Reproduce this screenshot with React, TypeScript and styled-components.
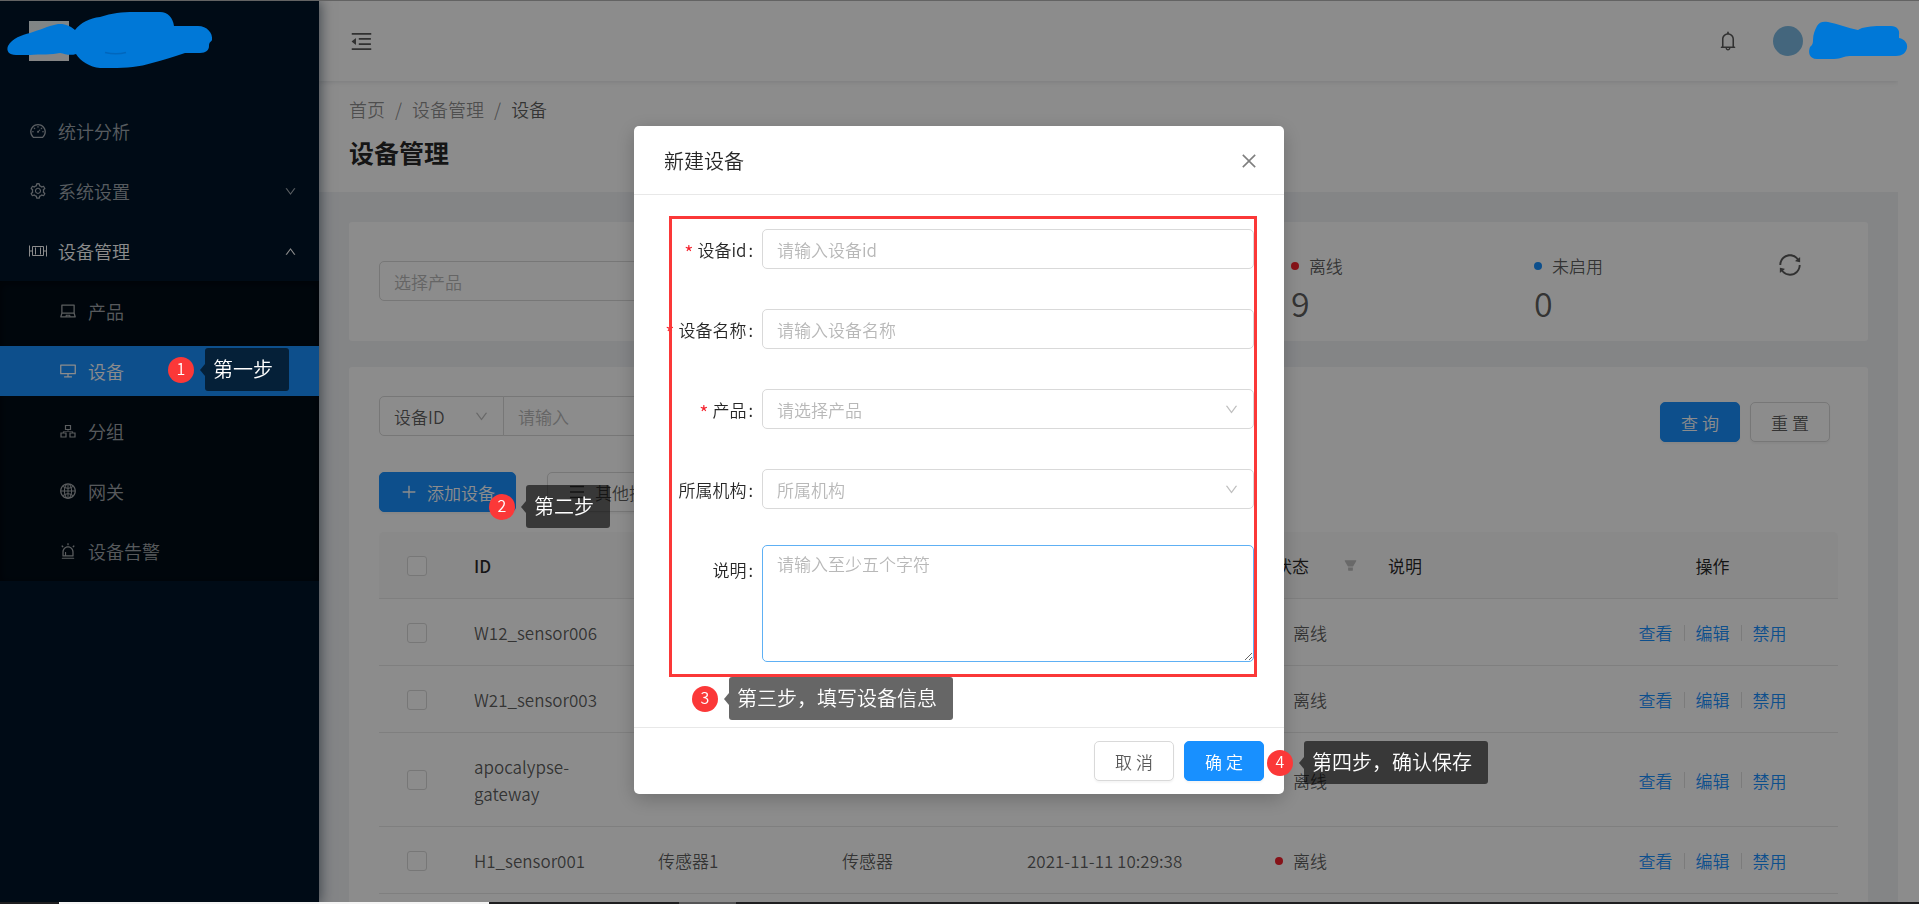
import React from "react";
import styled, { createGlobalStyle, css } from "styled-components";
import {
  AiFillFilter,
  AiOutlineAlert,
  AiOutlineBell,
  AiOutlineClose,
  AiOutlineDashboard,
  AiOutlineDesktop,
  AiOutlineDown,
  AiOutlineGlobal,
  AiOutlineLaptop,
  AiOutlineMenu,
  AiOutlineMenuFold,
  AiOutlinePlus,
  AiOutlineSetting,
  AiOutlineSync,
  AiOutlineUp,
} from "react-icons/ai";

const BLUE = "#1890ff";
const RED = "#fb3838";
const BORDER = "#d9d9d9";
const TEXT = "rgba(0, 0, 0, 0.65)";
const HEADING = "rgba(0, 0, 0, 0.85)";

const GlobalStyle = createGlobalStyle`
  *, *::before, *::after { box-sizing: border-box; }
  html, body { margin: 0; height: 100%; overflow: hidden; background: #fff; }
  body, button, input, select, textarea {
    font-family: "Noto Sans CJK SC", "Noto Sans", sans-serif;
    font-size: 17px;
    font-weight: 350;
    line-height: 27px;
    color: ${TEXT};
  }
  svg { display: block; flex: none; }
  a { color: inherit; text-decoration: none; }
`;

/* ---------- shell ---------- */

const Shell = styled.div`
  display: flex;
  height: 100vh;
  overflow: hidden;
  border-top: 1px solid #b5b5b5;
`;

const Sidebar = styled.nav`
  position: relative;
  z-index: 2;
  flex: none;
  width: 319px;
  background: #001529;
  box-shadow: 2px 0 12px rgba(0, 21, 41, 0.5);
`;

const Brand = styled.div`
  height: 95px;
  padding: 20px 29px;
`;

const Logo = styled.div`
  width: 40px;
  height: 40px;
  background: linear-gradient(#e8f2f4, #f2f2f2 40%);
`;

const MenuItem = styled.a<{ $bright?: boolean; $active?: boolean; $nested?: boolean }>`
  display: flex;
  align-items: center;
  gap: 11px;
  height: 50px;
  margin: 10px 0;
  padding: 0 22px 0 ${(p) => (p.$nested ? 59 : 29)}px;
  font-size: 18px;
  color: ${(p) => (p.$bright || p.$active ? "#fff" : "rgba(255, 255, 255, 0.65)")};
  background: ${(p) => (p.$active ? BLUE : "transparent")};
`;

const MenuLabel = styled.span`
  flex: 1;
`;

const SubMenu = styled.div`
  display: flow-root;
  height: 300px;
  margin-top: -5px;
  background: #000c17;
  box-shadow: inset 0 2px 10px rgba(0, 0, 0, 0.45);

  ${MenuItem}:first-child { margin-top: 5px; }
`;

const Main = styled.main`
  flex: 1;
  min-width: 0;
  overflow: hidden;
  display: flex;
  flex-direction: column;
  margin-right: 21px;
  background: #f0f2f5;
`;

const TopBar = styled.header`
  position: relative;
  flex: none;
  display: flex;
  align-items: center;
  height: 80px;
  padding: 0 95px 0 30px;
  background: #fff;
  box-shadow: 0 1px 5px rgba(0, 21, 41, 0.12);
`;

const IconButton = styled.button<{ $color?: string }>`
  display: flex;
  padding: 0;
  border: 0;
  background: none;
  color: ${(p) => p.$color ?? TEXT};
`;

const Account = styled.div`
  display: flex;
  align-items: center;
  gap: 34px;
  margin-left: auto;
`;

const Avatar = styled.div`
  width: 30px;
  height: 30px;
  border-radius: 50%;
  background: #7dbbe3;
`;

const PageHeader = styled.section`
  flex: none;
  padding: 15px 30px 22px;
  background: #fff;
`;

const Crumbs = styled.div`
  display: flex;
  gap: 10px;
  font-size: 18px;
  line-height: 26px;
  color: rgba(0, 0, 0, 0.45);
`;

const CurrentCrumb = styled.span`
  color: ${TEXT};
`;

const Title = styled.h1`
  margin: 12px 0 0;
  font-size: 25px;
  line-height: 36px;
  font-weight: 700;
  color: ${HEADING};
`;

const Content = styled.div`
  flex: 1;
  min-height: 0;
  display: flex;
  flex-direction: column;
  gap: 26px;
  padding: 30px 30px 0;
`;

const Card = styled.section`
  background: #fff;
  border-radius: 3px;
`;

/* ---------- form controls ---------- */

const control = css`
  height: 40px;
  padding: 0 14px;
  border: 1px solid ${BORDER};
  border-radius: 5px;
  background: #fff;
  outline: none;
  &::placeholder { color: #b8b8b8; opacity: 1; }
`;

const TextInput = styled.input<{ $joined?: boolean }>`
  ${control}
  width: ${(p) => (p.$joined ? "220px" : "100%")};
  ${(p) => p.$joined && "border-radius: 0 5px 5px 0; margin-left: -1px;"}
`;

const SelectBox = styled.div<{ $width?: string; $joined?: boolean; $muted?: boolean }>`
  display: flex;
  align-items: center;
  width: ${(p) => p.$width ?? "100%"};
  color: #bfbfbf;

  select {
    ${control}
    appearance: none;
    width: 100%;
    color: ${(p) => (p.$muted ? "#b8b8b8" : TEXT)};
    ${(p) => p.$joined && "border-radius: 5px 0 0 5px;"}
  }
  svg {
    margin-left: -30px;
    pointer-events: none;
  }
`;

const TextArea = styled.textarea`
  ${control}
  display: block;
  width: 100%;
  height: 117px;
  margin-top: -4px;
  padding: 4px 14px;
  border-color: #5eb0f4;
`;

const Button = styled.button<{ $primary?: boolean; $wide?: boolean }>`
  display: flex;
  align-items: center;
  justify-content: center;
  gap: 9px;
  height: 40px;
  min-width: 80px;
  padding: ${(p) => (p.$wide ? "0 20px" : "0")};
  border: 1px solid ${(p) => (p.$primary ? BLUE : BORDER)};
  border-radius: 5px;
  background: ${(p) => (p.$primary ? BLUE : "#fff")};
  color: ${(p) => (p.$primary ? "#fff" : TEXT)};
  box-shadow: 0 2px 2px rgba(0, 0, 0, 0.04);
  white-space: nowrap;
`;

/* ---------- statistics ---------- */

const StatCard = styled(Card)`
  display: grid;
  grid-template-columns: 15fr 4fr 4fr 1fr;
  padding: 30px 30px 22px;
`;

const ProductPicker = styled.div`
  margin-top: 9px;
`;

const Stat = styled.div`
  display: flex;
  flex-direction: column;
  gap: 8px;
`;

const StatusText = styled.span`
  display: flex;
  align-items: center;
  gap: 10px;
`;

const Dot = styled.i<{ $color: string }>`
  width: 8px;
  height: 8px;
  border-radius: 50%;
  background: ${(p) => p.$color};
`;

const StatValue = styled.span`
  font-size: 34px;
  line-height: 32px;
`;

/* ---------- table card ---------- */

const TableCard = styled(Card)`
  flex: 1;
  padding: 29px 30px 0;
`;

const SearchRow = styled.div`
  display: flex;
  align-items: flex-start;
  height: 46px;
  margin-bottom: 30px;
`;

const SearchButtons = styled.div`
  display: flex;
  align-self: flex-end;
  gap: 10px;
  margin-left: auto;
  padding-right: 8px;
`;

const ActionRow = styled.div`
  display: flex;
  gap: 31px;
  margin-bottom: 20px;
`;

const Table = styled.table`
  width: 100%;
  table-layout: fixed;
  border-collapse: separate;
  border-spacing: 0;

  th, td {
    padding: 20px 20px 19px;
    border-bottom: 1px solid #e8e8e8;
    text-align: left;
    vertical-align: middle;
  }
  th {
    font-weight: 400;
    color: ${HEADING};
    background: #fafafa;
  }
  th:first-child, td:first-child { padding-left: 28px; padding-right: 0; }
  th:first-child { border-top-left-radius: 5px; }
  th:last-child { border-top-right-radius: 5px; text-align: center; }
`;

const IdHead = styled.span`
  font-weight: 500;
`;

const Checkbox = styled.input`
  appearance: none;
  display: block;
  width: 20px;
  height: 20px;
  margin: 0;
  border: 1px solid ${BORDER};
  border-radius: 3px;
  background: #fff;
`;

const HeadWithFilter = styled.span`
  display: flex;
  align-items: center;
  justify-content: space-between;
  margin-right: -10px;
  color: ${HEADING};
  svg { color: #bfbfbf; }
`;

const RowActions = styled.div`
  display: flex;
  align-items: center;
  justify-content: center;
  color: ${BLUE};

  a + a {
    display: flex;
    align-items: center;
  }
  a + a::before {
    content: "";
    width: 1px;
    height: 16px;
    margin: 0 11px;
    background: #e0e0e0;
  }
`;

/* ---------- dialog ---------- */

const Mask = styled.div`
  position: fixed;
  inset: 0;
  z-index: 10;
  display: flex;
  justify-content: center;
  align-items: flex-start;
  padding: 126px 1px 0 0;
  background: rgba(0, 0, 0, 0.45);
`;

const Dialog = styled.div`
  position: relative;
  width: 650px;
  background: #fff;
  border-radius: 5px;
  box-shadow: 0 5px 20px rgba(0, 0, 0, 0.22);
`;

const DialogHeader = styled.div`
  display: flex;
  align-items: center;
  justify-content: space-between;
  height: 69px;
  padding: 2px 25px 0 30px;
  border-bottom: 1px solid #e8e8e8;
`;

const DialogTitle = styled.h2`
  margin: 0;
  font-size: 20px;
  font-weight: 350;
  line-height: 28px;
  color: ${HEADING};
`;

const DialogBody = styled.div`
  padding: 34px 30px 65px;
`;

const Fields = styled.div`
  position: relative;
  display: flex;
  flex-direction: column;
  gap: 40px;
`;

const Field = styled.div`
  display: grid;
  grid-template-columns: 98px 1fr;
`;

const FieldLabel = styled.label<{ $required?: boolean }>`
  display: flex;
  align-items: center;
  justify-content: flex-end;
  height: 40px;
  padding-right: 9px;
  white-space: nowrap;
  color: ${HEADING};

  &::after { content: ":"; margin-left: 2px; }
  ${(p) =>
    p.$required &&
    css`
      &::before {
        content: "*";
        padding-top: 6px;
        margin-right: 4px;
        font-size: 20px;
        color: #f5222d;
      }
    `}
`;

const DialogFooter = styled.div`
  display: flex;
  justify-content: flex-end;
  gap: 10px;
  padding: 13px 20px;
  border-top: 1px solid #e8e8e8;
`;

/* ---------- walkthrough marks ---------- */

const MarkRoot = styled.div<{ $x: number; $y: number; $fixed?: boolean }>`
  position: ${(p) => (p.$fixed ? "fixed" : "absolute")};
  z-index: 20;
  left: ${(p) => p.$x}px;
  top: ${(p) => p.$y}px;
  display: flex;
  align-items: center;
  gap: 11px;
  white-space: nowrap;
`;

const MarkNumber = styled.span`
  width: 26px;
  height: 26px;
  border-radius: 50%;
  background: ${RED};
  color: #fff;
  font-size: 16px;
  line-height: 23px;
  text-align: center;
`;

const MarkTip = styled.span`
  position: relative;
  height: 43px;
  padding: 0 16px 0 8px;
  border-radius: 3px;
  background: rgba(0, 0, 0, 0.6);
  color: #fff;
  font-size: 20px;
  line-height: 42px;

  &::before {
    content: "";
    position: absolute;
    right: 100%;
    top: 16px;
    border: solid transparent;
    border-width: 6px 5px 6px 0;
    border-right-color: rgba(0, 0, 0, 0.6);
  }
`;

const Frame = styled.div`
  position: absolute;
  inset: -13px -3px -15px 5px;
  border: 3px solid ${RED};
  pointer-events: none;
`;

const Scribble = styled.svg<{ $side: "left" | "right" }>`
  position: fixed;
  z-index: 20;
  top: 0;
  ${(p) => p.$side}: 0;
`;

const BottomStrip = styled.div`
  position: fixed;
  z-index: 30;
  inset: auto 0 0 0;
  display: flex;
  height: 2px;
  background: #1e1e20;
`;

const StripPart = styled.i<{ $width: number; $color: string }>`
  width: ${(p) => p.$width}px;
  background: ${(p) => p.$color};
`;

/* ---------- drawings ---------- */

const DeviceIcon = () => (
  <svg width="18" height="18" viewBox="0 0 18 18" fill="none" stroke="currentColor">
    <path d="M0.5 3.5v11M17.5 3.5v11M0.500 9H3.500M14.500 9h3" />
    <path d="M3.500 4.500h11v9h-11zM6.500 5.500v7M11.500 5.500v7" />
  </svg>
);

const GroupIcon = () => (
  <svg width="18" height="18" viewBox="0 0 18 18" fill="none" stroke="currentColor" strokeWidth="1.2">
    <path d="M6.500 3.500h5v4h-5zM2 11h5v4H2zM11 11h5v4h-5z" />
    <path d="M9 7.500v2M4.500 11V9.500h9V11" strokeOpacity="0.6" />
  </svg>
);

type MarkProps = { n: number; text: string; x: number; y: number; fixed?: boolean };

const Mark = ({ n, text, x, y, fixed }: MarkProps) => (
  <MarkRoot $x={x} $y={y} $fixed={fixed}>
    <MarkNumber>{n}</MarkNumber>
    <MarkTip>{text}</MarkTip>
  </MarkRoot>
);

/* ---------- data ---------- */

const submenu = [
  { label: "产品", icon: <AiOutlineLaptop size={18} /> },
  { label: "设备", icon: <AiOutlineDesktop size={18} />, active: true },
  { label: "分组", icon: <GroupIcon /> },
  { label: "网关", icon: <AiOutlineGlobal size={18} /> },
  { label: "设备告警", icon: <AiOutlineAlert size={18} /> },
];

const columns = [75, 184, 184, 185, 248, 113, 219, 251];

const devices = [
  { id: "W12_sensor006", name: "", product: "", time: "" },
  { id: "W21_sensor003", name: "", product: "", time: "" },
  { id: "apocalypse-gateway", name: "", product: "", time: "" },
  { id: "H1_sensor001", name: "传感器1", product: "传感器", time: "2021-11-11 10:29:38" },
];

export default function App() {
  return (
    <>
      <GlobalStyle />
      <Shell>
        <Sidebar>
          <Brand>
            <Logo />
          </Brand>
          <MenuItem href="#">
            <AiOutlineDashboard size={18} />
            <MenuLabel>统计分析</MenuLabel>
          </MenuItem>
          <MenuItem href="#">
            <AiOutlineSetting size={18} />
            <MenuLabel>系统设置</MenuLabel>
            <AiOutlineDown size={13} />
          </MenuItem>
          <MenuItem href="#" $bright>
            <DeviceIcon />
            <MenuLabel>设备管理</MenuLabel>
            <AiOutlineUp size={13} />
          </MenuItem>
          <SubMenu>
            {submenu.map((item) => (
              <MenuItem key={item.label} href="#" $nested $active={item.active}>
                {item.icon}
                <MenuLabel>{item.label}</MenuLabel>
              </MenuItem>
            ))}
          </SubMenu>
        </Sidebar>

        <Main>
          <TopBar>
            <IconButton aria-label="收起菜单">
              <AiOutlineMenuFold size={25} />
            </IconButton>
            <Account>
              <IconButton aria-label="通知">
                <AiOutlineBell size={22} />
              </IconButton>
              <Avatar />
            </Account>
          </TopBar>
          <PageHeader>
            <Crumbs>
              <a href="#">首页</a>
              <span>/</span>
              <a href="#">设备管理</a>
              <span>/</span>
              <CurrentCrumb>设备</CurrentCrumb>
            </Crumbs>
            <Title>设备管理</Title>
          </PageHeader>

          <Content>
            <StatCard>
              <ProductPicker>
                <SelectBox $width="480px" $muted>
                  <select aria-label="选择产品">
                    <option>选择产品</option>
                  </select>
                </SelectBox>
              </ProductPicker>
              <Stat>
                <StatusText>
                  <Dot $color="#f5222d" />
                  离线
                </StatusText>
                <StatValue>9</StatValue>
              </Stat>
              <Stat>
                <StatusText>
                  <Dot $color={BLUE} />
                  未启用
                </StatusText>
                <StatValue>0</StatValue>
              </Stat>
              <IconButton aria-label="刷新">
                <AiOutlineSync size={26} />
              </IconButton>
            </StatCard>

            <TableCard>
              <SearchRow>
                <SelectBox $width="125px" $joined>
                  <select aria-label="搜索字段">
                    <option>设备ID</option>
                  </select>
                  <AiOutlineDown size={15} />
                </SelectBox>
                <TextInput $joined aria-label="搜索内容" placeholder="请输入" />
                <SearchButtons>
                  <Button $primary>查 询</Button>
                  <Button>重 置</Button>
                </SearchButtons>
              </SearchRow>
              <ActionRow>
                <Button $primary $wide>
                  <AiOutlinePlus size={18} />
                  添加设备
                </Button>
                <Button $wide>
                  <AiOutlineMenu size={18} />
                  其他操作
                </Button>
              </ActionRow>
              <Table>
                <colgroup>
                  {columns.map((width, i) => (
                    <col key={i} width={width} />
                  ))}
                </colgroup>
                <thead>
                  <tr>
                    <th>
                      <Checkbox type="checkbox" aria-label="全选" />
                    </th>
                    <th>
                      <IdHead>ID</IdHead>
                    </th>
                    <th />
                    <th />
                    <th />
                    <th>
                      <HeadWithFilter>
                        状态
                        <AiFillFilter size={15} />
                      </HeadWithFilter>
                    </th>
                    <th>说明</th>
                    <th>操作</th>
                  </tr>
                </thead>
                <tbody>
                  {devices.map((device) => (
                    <tr key={device.id}>
                      <td>
                        <Checkbox type="checkbox" aria-label={device.id} />
                      </td>
                      <td>{device.id}</td>
                      <td>{device.name}</td>
                      <td>{device.product}</td>
                      <td>{device.time}</td>
                      <td>
                        <StatusText>
                          <Dot $color="#f5222d" />
                          离线
                        </StatusText>
                      </td>
                      <td />
                      <td>
                        <RowActions>
                          <a href="#">查看</a>
                          <a href="#">编辑</a>
                          <a href="#">禁用</a>
                        </RowActions>
                      </td>
                    </tr>
                  ))}
                </tbody>
              </Table>
            </TableCard>
          </Content>
        </Main>
      </Shell>

      <Mask>
        <Dialog role="dialog" aria-labelledby="dialog-title">
          <DialogHeader>
            <DialogTitle id="dialog-title">新建设备</DialogTitle>
            <IconButton aria-label="关闭" $color="rgba(0, 0, 0, 0.5)">
              <AiOutlineClose size={20} />
            </IconButton>
          </DialogHeader>
          <DialogBody>
            <Fields>
              <Field>
                <FieldLabel htmlFor="device-id" $required>设备id</FieldLabel>
                <TextInput id="device-id" placeholder="请输入设备id" />
              </Field>
              <Field>
                <FieldLabel htmlFor="device-name" $required>设备名称</FieldLabel>
                <TextInput id="device-name" placeholder="请输入设备名称" />
              </Field>
              <Field>
                <FieldLabel htmlFor="product" $required>产品</FieldLabel>
                <SelectBox $muted>
                  <select id="product">
                    <option>请选择产品</option>
                  </select>
                  <AiOutlineDown size={15} />
                </SelectBox>
              </Field>
              <Field>
                <FieldLabel htmlFor="organization">所属机构</FieldLabel>
                <SelectBox $muted>
                  <select id="organization">
                    <option>所属机构</option>
                  </select>
                  <AiOutlineDown size={15} />
                </SelectBox>
              </Field>
              <Field>
                <FieldLabel htmlFor="description">说明</FieldLabel>
                <TextArea id="description" placeholder="请输入至少五个字符" />
              </Field>
              <Frame />
            </Fields>
          </DialogBody>
          <DialogFooter>
            <Button>取 消</Button>
            <Button $primary>确 定</Button>
          </DialogFooter>
          <Mark n={3} text="第三步，填写设备信息" x={58} y={551} />
          <Mark n={4} text="第四步，确认保存" x={633} y={615} />
        </Dialog>
      </Mask>

      <Mark fixed n={1} text="第一步" x={168} y={348} />
      <Mark fixed n={2} text="第二步" x={489} y={485} />

      <Scribble $side="left" width="220" height="72" viewBox="0 0 220 72" fill="#0078d7">
        <path d="M8 46C12 38 22 35 30 33C40 30 48 26 56 24.500C64 23 70 26 75 30C80 23 90 18 100 17C112 13 122 12 134 12H160C168 12 173 18 174 26H198C207 26 213 33 212 40C211 42 209 42 209 46C209 50 206 53 200 53H185C175 56 165 60 152 63C140 67 126 68 112 68H100C90 67 80 61 76 54C70 56 65 54 60 53C52 55 40 54 30 55H16C9 55 6 51 8 46Z" />
        <path d="M105 52.500C112 54 120 54 126 52.500" fill="none" stroke="#0067bd" strokeWidth="1.500" />
      </Scribble>
      <Scribble $side="right" width="119" height="72" viewBox="1800 0 119 72" fill="#0078d7">
        <path d="M1810 47C1812 45 1813 44 1813 40C1813 34 1815 30 1817 26C1819 22 1823 21 1828 22C1838 24 1848 28 1858 30C1862 27 1872 26 1880 26H1891C1897 26 1900 30 1899 35V38C1905 39 1908 44 1907 48C1906 53 1902 56 1896 56H1850C1843 56 1842 59 1834 59H1817C1809 59 1808 52 1810 47Z" />
      </Scribble>

      <BottomStrip>
        <StripPart $width={59} $color="#1e1e20" />
        <StripPart $width={430} $color="#f4f4f4" />
        <StripPart $width={190} $color="#1e1e20" />
        <StripPart $width={57} $color="#555556" />
      </BottomStrip>
    </>
  );
}
